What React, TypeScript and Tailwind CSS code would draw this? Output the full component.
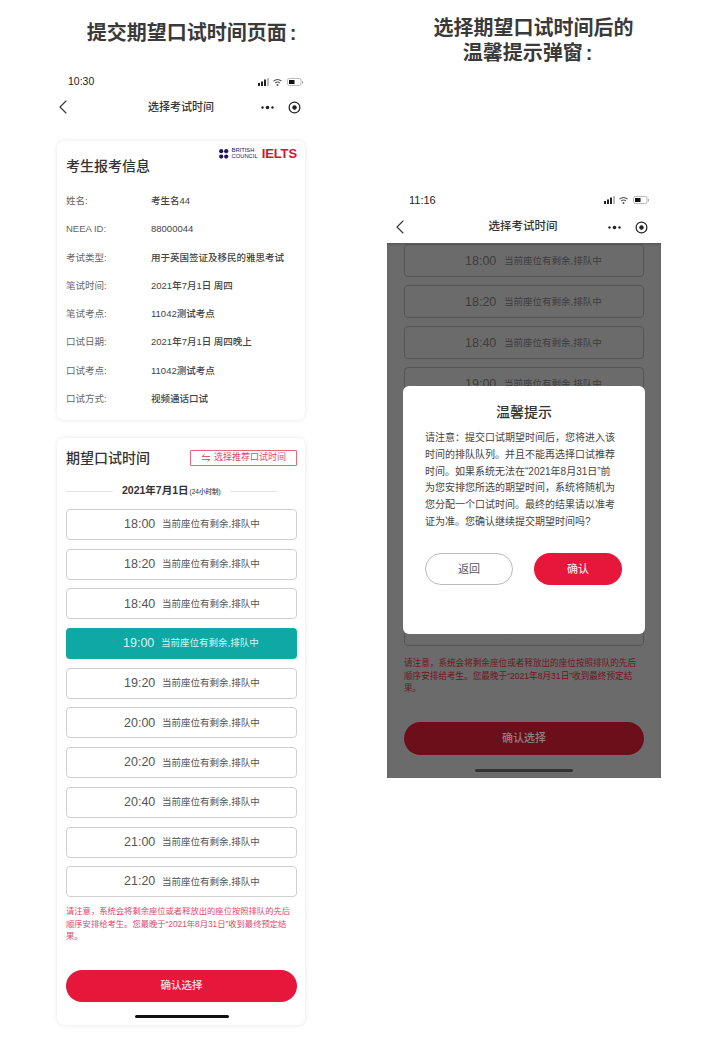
import { ChevronLeft } from 'lucide-react';

const times = ['18:00', '18:20', '18:40', '19:00', '19:20', '20:00', '20:20', '20:40', '21:00', '21:20'];
// rows that sit fully behind the modal show no text
const darkTimes = ['18:00', '18:20', '18:40', '19:00', '', '', '', '', '', '21:20'];

const infoRows = [
  ['姓名:', '考生名44'],
  ['NEEA ID:', '88000044'],
  ['考试类型:', '用于英国签证及移民的雅思考试'],
  ['笔试时间:', '2021年7月1日 周四'],
  ['笔试考点:', '11042测试考点'],
  ['口试日期:', '2021年7月1日 周四晚上'],
  ['口试考点:', '11042测试考点'],
  ['口试方式:', '视频通话口试'],
];

const noteLines = [
  '请注意\uFF0C系统会将剩余座位或者释放出的座位按照排队的先后',
  '顺序安排给考生\u3002您最晚于\u201C2021年8月31日\u201D收到最终预定结',
  '果\u3002',
];

const modalLines = [
  '请注意\uFF1A提交口试期望时间后\uFF0C您将进入该',
  '时间的排队队列\u3002并且不能再选择口试推荐',
  '时间\u3002如果系统无法在\u201C2021年8月31日\u201D前',
  '为您安排您所选的期望时间\uFF0C系统将随机为',
  '您分配一个口试时间\u3002最终的结果请以准考',
  '证为准\u3002您确认继续提交期望时间吗?',
];

function StatusIcons() {
  return (
    <svg width="46" height="10" viewBox="0 0 46 10" className="shrink-0">
      <rect x="0" y="6" width="2" height="3" fill="#222" />
      <rect x="3" y="4.5" width="2" height="4.5" fill="#222" />
      <rect x="6" y="2.5" width="2" height="6.5" fill="#222" />
      <rect x="9" y="1" width="2" height="8" fill="#bbb" />
      <path d="M15.5 4.2a6 6 0 0 1 8 0M17.2 6a3.6 3.6 0 0 1 4.6 0" fill="none" stroke="#555" strokeWidth="1.1" />
      <circle cx="19.5" cy="8" r="1" fill="#555" />
      <rect x="29.5" y="1.5" width="13.5" height="7" rx="1.8" fill="none" stroke="#aaa" strokeWidth="0.8" />
      <rect x="31" y="3" width="5.5" height="4" fill="#111" />
      <rect x="44" y="4" width="1" height="2.5" fill="#aaa" />
    </svg>
  );
}

function NavBar({ big }: { big?: boolean }) {
  return (
    <div className="grid grid-cols-[1fr_auto_1fr] items-center h-[22px]">
      <ChevronLeft className="w-6 h-6 -ml-[6px] -my-px text-[#333]" strokeWidth={1.1} />
      <div className={`font-medium text-[#333] ${big ? 'text-[11.5px]' : 'text-[11px]'}`}>选择考试时间</div>
      <div className="flex items-center justify-end gap-[14px] pr-[4px]">
        <svg width="13" height="5" viewBox="0 0 13 5">
          <circle cx="1.5" cy="2.5" r="1.2" fill="#222" />
          <circle cx="6.5" cy="2.5" r="1.8" fill="#222" />
          <circle cx="11.5" cy="2.5" r="1.2" fill="#222" />
        </svg>
        <svg width="13" height="13" viewBox="0 0 13 13">
          <circle cx="6.5" cy="6.5" r="5.4" fill="none" stroke="#222" strokeWidth="1.2" />
          <circle cx="6.5" cy="6.5" r="2.2" fill="#222" />
        </svg>
      </div>
    </div>
  );
}

function Slot({ time, active }: { time: string; active?: boolean }) {
  return (
    <div
      className={`h-[31px] rounded-[4px] flex items-center gap-[8px] pl-[57px] ${
        active ? 'bg-[#0ea9a5] text-[#d8f5f3]' : 'bg-white border border-[#cfcfcf] text-[#555]'
      }`}
    >
      <span className="text-[12.5px] w-[30px] whitespace-nowrap">{time}</span>
      <span className="text-[9.5px] whitespace-nowrap">当前座位有剩余,排队中</span>
    </div>
  );
}

function DarkSlot({ time }: { time: string }) {
  return (
    <div className="h-[33px] rounded-[4px] border border-[#555] flex items-center gap-[9px] pl-[60px] pt-[2px] text-[#3d3d3d]">
      {time && <span className="text-[12.5px] w-[30px] whitespace-nowrap">{time}</span>}
      {time && <span className="text-[9.5px] whitespace-nowrap">当前座位有剩余,排队中</span>}
    </div>
  );
}

export default function App() {
  return (
    <div className="w-[720px] h-[1040px] overflow-hidden bg-white flex font-['Liberation_Sans','Noto_Sans_CJK_SC',sans-serif]">
      {/* Left phone */}
      <div className="w-[248px] ml-[57px] shrink-0">
        <h2 className="ml-[21px] mt-[20px] h-[26px] leading-[26px] text-center text-[20px] font-bold text-[#3a3a3a] whitespace-nowrap">
          提交期望口试时间页面<span className="ml-[3px]">:</span>
        </h2>
        <div className="mt-[28px] h-[16px] flex items-center justify-between pl-[11px] pr-[1px]">
          <span className="text-[10.5px] font-medium text-[#222]">10:30</span>
          <StatusIcons />
        </div>
        <div className="mt-[6px]">
          <NavBar />
        </div>

        <div className="mt-[23px] h-[279px] rounded-[7px] bg-white shadow-[0_0_5px_rgba(0,0,0,0.1)] pl-[9px] pr-[8px] pt-[7px]">
          <div className="flex justify-between items-start">
            <div className="mt-[8px] h-[20px] leading-[20px] text-[14px] font-medium text-[#333]">考生报考信息</div>
            <div className="flex items-center gap-[4px]">
              <svg width="12" height="10" viewBox="0 0 12 10">
                <circle cx="2.2" cy="2.2" r="2.1" fill="#23135f" />
                <circle cx="7.2" cy="2.2" r="2.1" fill="#23135f" />
                <circle cx="2.2" cy="7.6" r="2.1" fill="#23135f" />
                <circle cx="7.2" cy="7.6" r="2.1" fill="#23135f" />
              </svg>
              <div className="-ml-[3px] text-[5.8px] leading-[5.5px] text-[#23135f]">
                BRITISH
                <br />
                COUNCIL
              </div>
              <div className="text-[13px] leading-[11px] font-bold text-[#d0152f] tracking-[-0.1px]">IELTS</div>
            </div>
          </div>
          <div className="mt-[11px]">
            {infoRows.map(([label, value]) => (
              <div key={label} className="h-[28.25px] flex items-center text-[9.5px]">
                <span className="w-[85px] text-[#666]">{label}</span>
                <span className="text-[#444] font-medium whitespace-nowrap">{value}</span>
              </div>
            ))}
          </div>
        </div>

        <div className="mt-[18px] h-[587px] rounded-[7px] bg-white shadow-[0_0_5px_rgba(0,0,0,0.1)] pl-[9px] pr-[8px] pt-[10px]">
          <div className="flex justify-between items-center h-[20px]">
            <div className="text-[14px] font-medium text-[#333]">期望口试时间</div>
            <div className="w-[107px] h-[16px] border border-[#e8657c] rounded-[1px] flex items-center justify-center gap-[3px] text-[9px] text-[#d9486a]">
              <svg width="10" height="8" viewBox="0 0 10 8" fill="none" stroke="#d9486a" strokeWidth="0.9">
                <path d="M9 2.5H1L3.5 0.5M1 5.5H9L6.5 7.5" />
              </svg>
              选择推荐口试时间
            </div>
          </div>
          <div className="mt-[15px] h-[16px] flex items-center">
            <div className="w-[47px] h-px bg-[#e4e4e4]" />
            <div className="ml-[9px] flex items-baseline text-[10.5px] font-semibold text-[#333] whitespace-nowrap">
              2021年7月1日<span className="text-[6.5px] font-medium ml-[1px]">(24小时制)</span>
            </div>
            <div className="ml-[9px] w-[47px] h-px bg-[#e4e4e4]" />
          </div>
          <div className="mt-[10px] flex flex-col gap-[8.7px]">
            {times.map((t) => (
              <Slot key={t} time={t} active={t === '19:00'} />
            ))}
          </div>
          <div className="mt-[8px] text-[8.3px] leading-[12.5px] text-[#d9486a] whitespace-nowrap">
            {noteLines.map((l) => (
              <div key={l}>{l}</div>
            ))}
          </div>
          <div className="mt-[27px] h-[32px] rounded-full bg-[#e6173a] flex items-center justify-center text-[10.5px] font-medium text-[#fbe3e6]">
            确认选择
          </div>
          <div className="mt-[13px] mx-auto w-[94px] h-[3px] rounded-full bg-[#111]" />
        </div>
      </div>

      {/* Right phone */}
      <div className="w-[274px] ml-[82px] shrink-0">
        <h2 className="ml-[19px] mt-[16px] text-center text-[20px] leading-[25px] font-bold text-[#3a3a3a] whitespace-nowrap">
          选择期望口试时间后的
          <div className="mr-[12px]">
            温馨提示弹窗<span className="ml-[3px]">:</span>
          </div>
        </h2>
        <div className="mt-[126px] h-[16px] flex items-center justify-between pl-[22px] pr-[11px]">
          <span className="text-[11px] font-medium text-[#222]">11:16</span>
          <StatusIcons />
        </div>
        <div className="mt-[8px] pl-[7px] pr-[9px]">
          <NavBar big />
        </div>

        <div className="relative mt-[5px] h-[535px] bg-[#6b6b6b] overflow-hidden shadow-[inset_0_2px_2px_rgba(0,0,0,0.15)]">
          <div className="px-[17px] pt-[1px]">
            <div className="flex flex-col gap-[8px]">
              {darkTimes.map((t, i) => (
                <DarkSlot key={i} time={t} />
              ))}
            </div>
            <div className="mt-[11px] text-[8.6px] leading-[12.5px] text-[#6e1620] whitespace-nowrap">
              {noteLines.map((l) => (
                <div key={l}>{l}</div>
              ))}
            </div>
            <div className="mt-[27px] h-[33px] rounded-full bg-[#6d0f1b] flex items-center justify-center text-[11px] font-medium text-[#8f8082]">
              确认选择
            </div>
            <div className="mt-[14px] mx-auto w-[98px] h-[3px] rounded-full bg-[#333]" />
          </div>

          {/* Modal */}
          <div className="absolute left-[16px] top-[143px] w-[242px] h-[248px] rounded-[6px] bg-white px-[22px] pt-[16px]">
            <div className="h-[20px] leading-[20px] text-center text-[14px] font-medium text-[#333]">温馨提示</div>
            <div className="mt-[8px] text-[10px] leading-[16.8px] text-[#444] whitespace-nowrap">
              {modalLines.map((l) => (
                <div key={l}>{l}</div>
              ))}
            </div>
            <div className="mt-[22px] w-[197px] flex justify-between">
              <div className="w-[88px] h-[32px] rounded-full border border-[#bbb] flex items-center justify-center text-[11px] text-[#555]">
                返回
              </div>
              <div className="w-[88px] h-[32px] rounded-full bg-[#e6173a] flex items-center justify-center text-[11px] font-medium text-[#fbdfe3]">
                确认
              </div>
            </div>
          </div>
        </div>
      </div>
    </div>
  );
}
